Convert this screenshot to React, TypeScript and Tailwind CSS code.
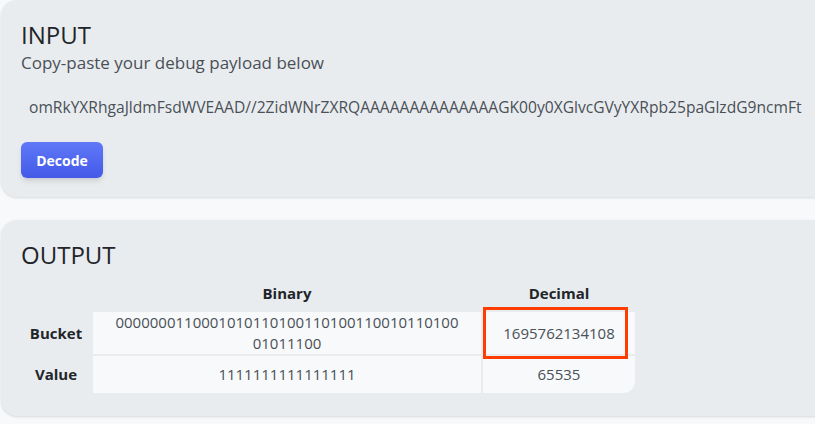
import React from "react";

const payload =
  "omRkYXRhgaJldmFsdWVEAAD//2ZidWNrZXRQAAAAAAAAAAAAAAGK00y0XGlvcGVyYXRpb25paGlzdG9ncmFt";

const App = () => {
  return (
    <div className="min-h-screen w-full overflow-hidden bg-[#f8f9fa] font-['Open_Sans',sans-serif]">
      <div className="ml-px flex w-[840px] flex-col gap-[23px]">
        {/* input card */}
        <section className="h-[197px] rounded-2xl bg-[#e9ecef] px-5 pt-5 shadow-sm">
          <h2 className="text-[24px] leading-[30px] text-[#212529]">INPUT</h2>
          <p className="text-[17px] leading-[26px] text-[#495057]">Copy-paste your debug payload below</p>
          <p className="mt-[19px] pl-2 text-[15.6px] leading-6 whitespace-nowrap text-[#495057]">{payload}</p>
          <button className="mt-[23px] h-9 w-[82px] rounded-md bg-linear-to-b from-[#5f78f8] to-[#4559e8] text-[14px] font-bold text-white shadow-md">
            Decode
          </button>
        </section>

        {/* output card */}
        <section className="h-[196px] rounded-2xl bg-[#e9ecef] px-5 pt-5 shadow-sm">
          <h2 className="text-[24px] leading-[30px] text-[#212529]">OUTPUT</h2>
          <div className="grid grid-cols-[70px_388px_152px] grid-rows-[40px_42px_37px] gap-[2px] text-[15px] text-[#495057]">
            <div />
            <div className="flex items-end justify-center pb-[5px] text-[15px] leading-6 font-bold text-[#212529]">Binary</div>
            <div className="flex items-end justify-center pb-[5px] text-[15px] leading-6 font-bold text-[#212529]">Decimal</div>

            <div className="flex items-center justify-center text-[15px] font-bold text-[#212529]">Bucket</div>
            <div className="bg-[#f8f9fa] px-5 text-center leading-[21px] break-all">
              000000011000101011010011010011001011010001011100
            </div>
            <div className="relative flex items-center justify-center bg-[#f8f9fa]">
              1695762134108
              <div className="absolute -top-[5px] right-[7px] -bottom-[5px] left-0 border-[3px] border-[#ff3d00]" />
            </div>

            <div className="flex items-center justify-center text-[15px] font-bold text-[#212529]">Value</div>
            <div className="flex items-center justify-center bg-[#f8f9fa]">1111111111111111</div>
            <div className="flex items-center justify-center rounded-br-xl bg-[#f8f9fa]">65535</div>
          </div>
        </section>
      </div>
    </div>
  );
};

export default App;
